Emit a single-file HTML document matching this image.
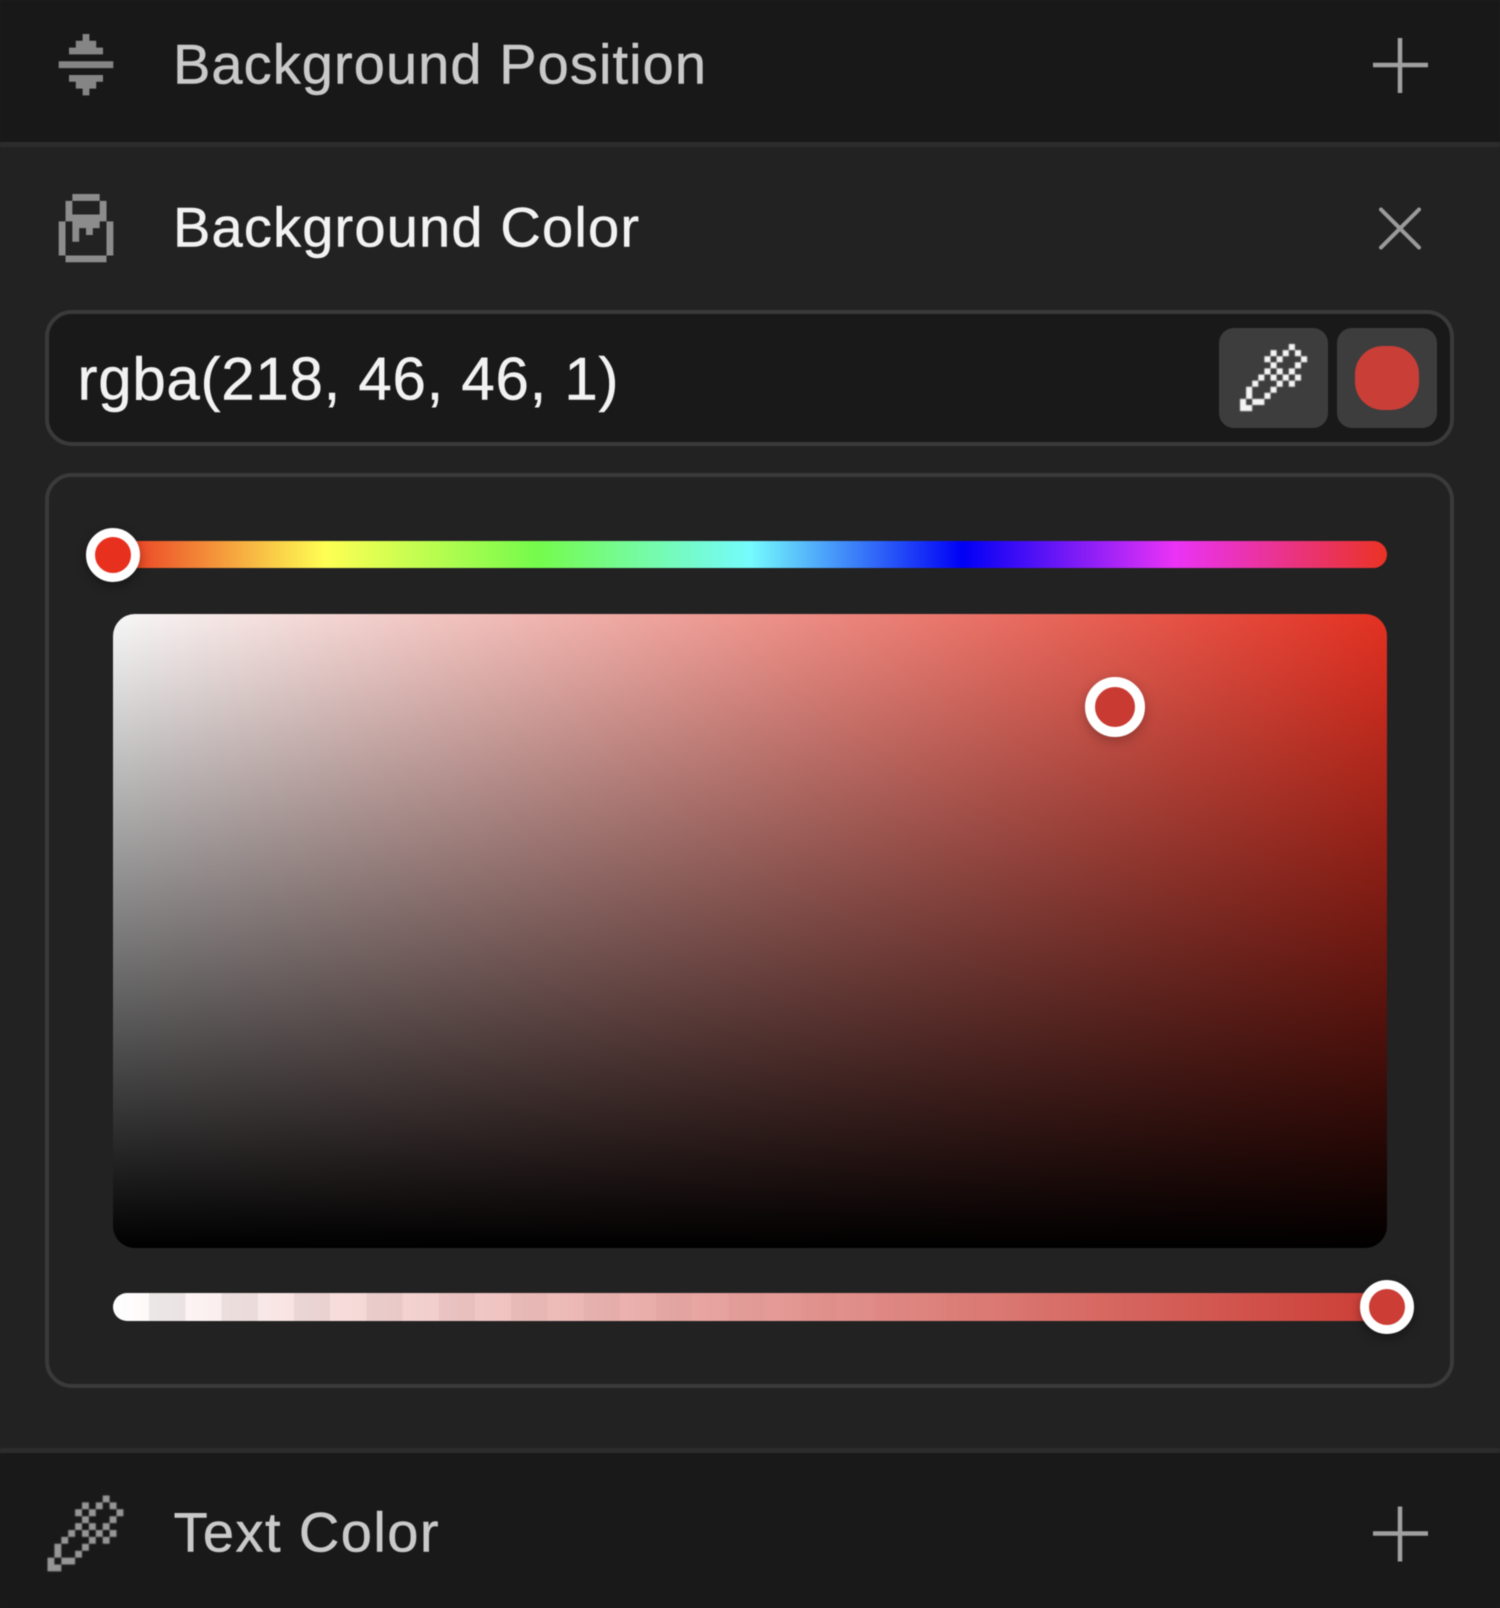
<!DOCTYPE html>
<html lang="en">
<head>
<meta charset="utf-8">
<title>Background Color</title>
<style>
html,body{margin:0;padding:0;background:#222;}
#p{position:relative;width:1500px;height:1608px;overflow:hidden;background:#222;filter:blur(.55px);font-family:"Liberation Sans",sans-serif;}
#p div{position:absolute;box-sizing:border-box;}
svg{position:absolute;left:0;top:0;}
text{font-family:"Liberation Sans",sans-serif;stroke-width:.5px;}
.dr{filter:blur(.09px);}
</style>
</head>
<body>
<div id="p">
  <div style="left:0;top:0;width:1500px;height:142px;background:#181818"></div>
  <div style="left:0;top:142px;width:1500px;height:5px;background:#2c2c2c"></div>
  <div style="left:0;top:1448px;width:1500px;height:4.500px;background:#2c2c2c"></div>
  <div style="left:0;top:1452.500px;width:1500px;height:156px;background:#191919"></div>

  <div style="left:45px;top:310px;width:1409px;height:136px;background:#191919;border:4.5px solid #3a3a3a;border-radius:27px"></div>
  <div style="left:1219px;top:328px;width:109px;height:100px;background:#3d3d3d;border-radius:15px"></div>
  <div style="left:1337px;top:328px;width:100px;height:100px;background:#3d3d3d;border-radius:15px"></div>
  <div style="left:1355px;top:346px;width:64px;height:64px;background:#c93e36;border-radius:28px"></div>

  <div style="left:45px;top:473px;width:1409px;height:915px;border:4.5px solid #3a3a3a;border-radius:27px"></div>

  <div style="left:113px;top:541px;width:1274px;height:27px;border-radius:14px;background:linear-gradient(to right,#ea3323 0%,#ffff54 16.7%,#75fb4c 33.3%,#75fbfd 50%,#0000f5 66.7%,#ea33f7 83.3%,#ea3323 100%)"></div>
  <div style="left:86px;top:528px;width:54px;height:54px;border-radius:50%;background:#e8301f;border:9px solid #fff;box-shadow:0 4px 10px rgba(0,0,0,.35)"></div>

  <div style="left:113px;top:614px;width:1274px;height:634px;border-radius:22px;background:linear-gradient(to bottom,rgba(0,0,0,.03) 0%,rgba(0,0,0,.12) 10%,#000 100%),linear-gradient(to right,#fff,#ea3323)"></div>
  <div style="left:1085px;top:677px;width:60px;height:60px;border-radius:50%;background:#c93a32;border:10px solid #fff;box-shadow:0 4px 12px rgba(0,0,0,.25)"></div>

  <div style="left:113px;top:1293px;width:1274px;height:28px;border-radius:14px;background:linear-gradient(to right,rgba(203,61,53,0),rgba(203,61,53,1)),linear-gradient(to right,rgba(255,255,255,0),rgba(255,255,255,.75) 55%,#fff),repeating-linear-gradient(to right,#fff 0,#fff 36.2px,#ececec 36.2px,#ececec 72.4px)"></div>
  <div style="left:1360px;top:1280px;width:54px;height:54px;border-radius:50%;background:#cb3d35;border:9px solid #fff;box-shadow:0 4px 10px rgba(0,0,0,.35)"></div>

  <svg width="1500" height="1608" viewBox="0 0 1500 1608" xmlns="http://www.w3.org/2000/svg">
    <defs>
      <path id="drop" d="M8 0h1v1h-1zM5 1h1v1h-1zM7 1h1v1h-1zM9 1h1v1h-1zM4 2h1v1h-1zM6 2h1v1h-1zM10 2h1v1h-1zM5 3h1v1h-1zM9 3h1v1h-1zM4 4h1v1h-1zM6 4h1v1h-1zM8 4h1v1h-1zM3 5h1v1h-1zM5 5h1v1h-1zM7 5h1v1h-1zM9 5h1v1h-1zM2 6h1v1h-1zM6 6h1v1h-1zM8 6h1v1h-1zM1 7h1v2h-1zM5 7h1v1h-1zM4 8h1v1h-1zM0 9h1v1h-1zM2 9h2v1h-2zM0 10h2v1h-2z"/>
    </defs>

    <!-- position icon -->
    <path fill="#858585" d="M82.6 34h6.8v6.8h-6.8zM75.800 40.800h20.400v6.800h-20.400zM69 47.600h34v6.800h-34zM58.700 61.300h54.600v6.800h-54.600zM69 75h34v6.800h-34zM75.800 81.800h20.400v6.800h-20.400zM82.600 88.600h6.800v6.800h-6.800z"/>

    <!-- bucket icon -->
    <g fill="#8c8c8c" transform="translate(58.7 194) scale(6.83)">
      <path d="M2 0h4v1h-4zM1 1h1v2h-1zM6 1h1v2h-1zM1 3h6v1h-6zM0 4h1v5h-1zM7 4h1v5h-1zM1 9h6v1h-6zM2 4h1v3h-1zM3 4h1v1h-1zM4 4h1v2h-1zM5 4h1v1h-1z"/>
    </g>

    <!-- eyedropper button -->
    <use class="dr" href="#drop" fill="#f4f4f4" transform="translate(1240 344) scale(6.1)"/>
    <!-- text color icon -->
    <use class="dr" href="#drop" fill="#969696" transform="translate(47.5 1495.5) scale(6.9)"/>

    <!-- plus / x -->
    <path d="M1373 65h55M1400 38v55" stroke="#a0a0a0" stroke-width="4.5" fill="none"/>
    <path d="M1381 209.500l38 38M1419 209.500l-38 38" stroke="#9a9a9a" stroke-width="4" fill="none" stroke-linecap="round"/>
    <path d="M1373 1533.500h55M1400 1506.500v55" stroke="#a0a0a0" stroke-width="4.5" fill="none"/>

    <!-- labels -->
    <text x="173" y="83.500" font-size="56" fill="#c9c9c9" stroke="#c9c9c9" textLength="533" lengthAdjust="spacing">Background Position</text>
    <text x="173" y="246.500" font-size="56" fill="#f2f2f2" stroke="#f2f2f2" textLength="466" lengthAdjust="spacing">Background Color</text>
    <text x="77.500" y="399.500" font-size="60" fill="#f2f2f2" stroke="#f2f2f2" textLength="541" lengthAdjust="spacing">rgba(218, 46, 46, 1)</text>
    <text x="173.500" y="1551.500" font-size="56" fill="#c9c9c9" stroke="#c9c9c9" textLength="265" lengthAdjust="spacing">Text Color</text>
  </svg>
</div>
</body>
</html>
